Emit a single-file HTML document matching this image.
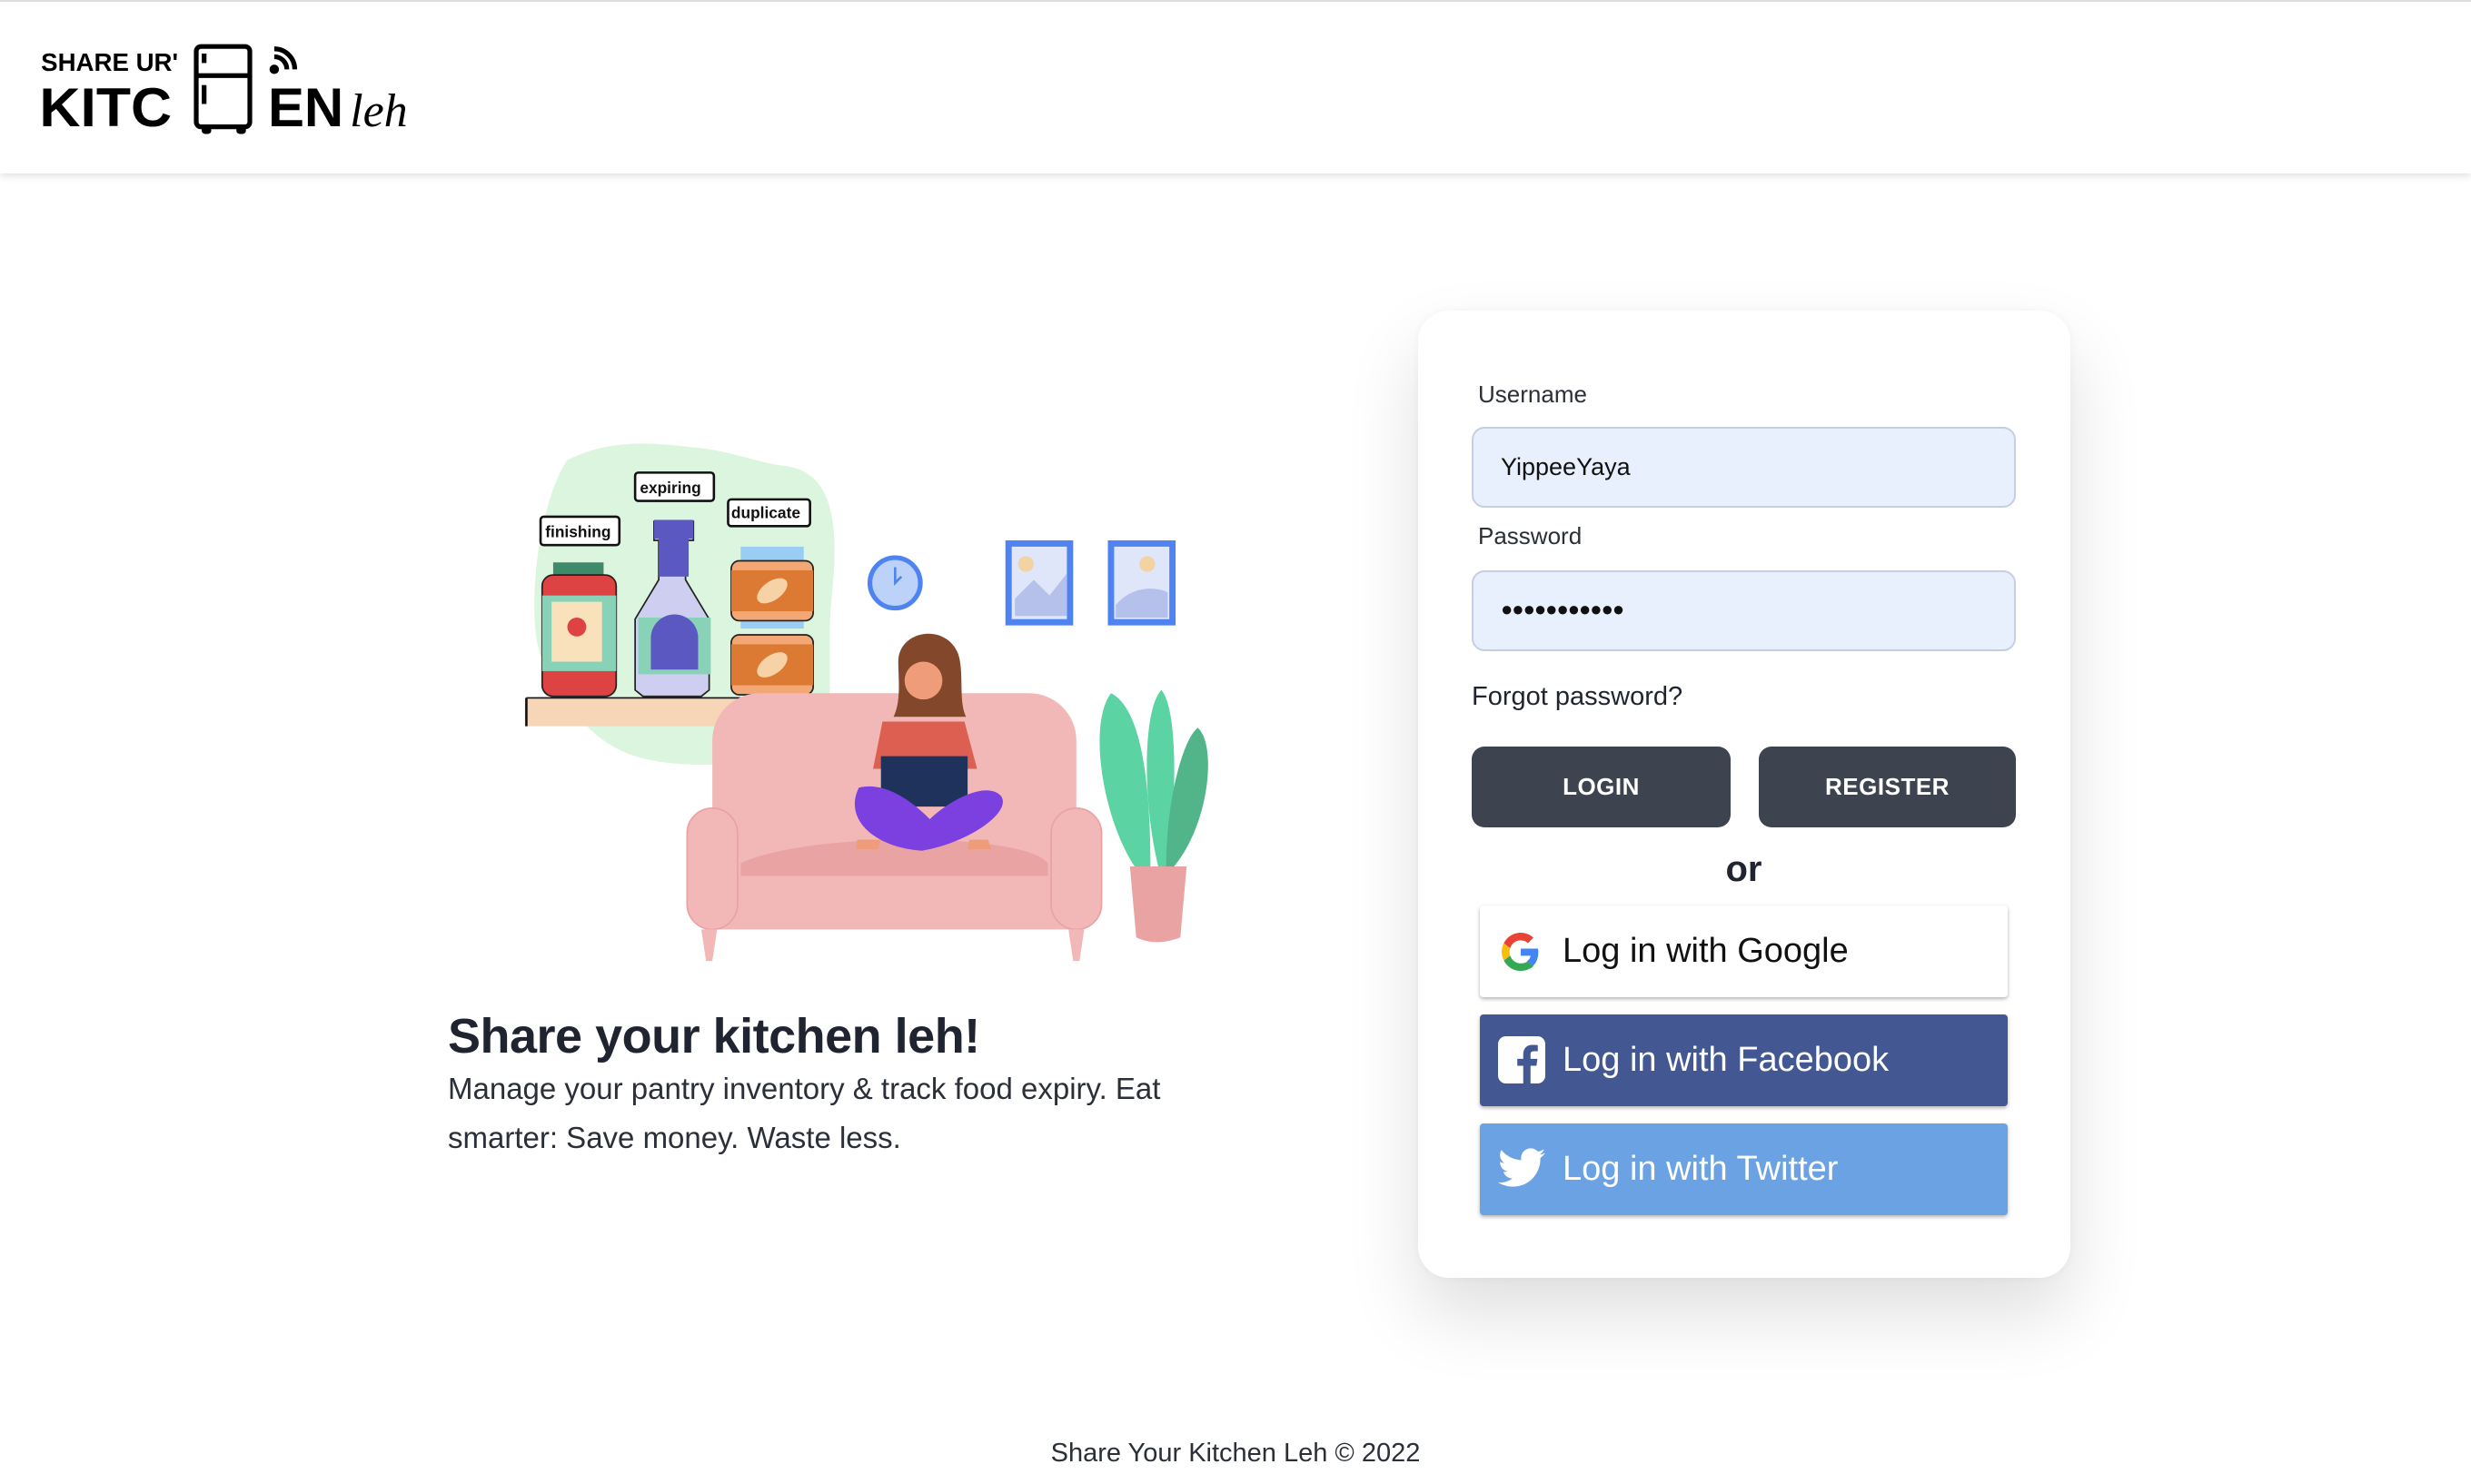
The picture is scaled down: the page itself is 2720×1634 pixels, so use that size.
<!DOCTYPE html>
<html><head><meta charset="utf-8"><style>
*{margin:0;padding:0;box-sizing:border-box}
body{width:2720px;height:1634px;background:#fff;font-family:"Liberation Sans",Arial,sans-serif;position:relative;overflow:hidden;color:#1f2430}
.hdr{position:absolute;left:0;top:0;width:2720px;height:191px;border-top:2px solid #ddd;box-shadow:0 3px 8px rgba(0,0,0,.12);background:#fff}
.abs{position:absolute}
.card{left:1561px;top:342px;width:718px;height:1065px;border-radius:34px;background:#fff;box-shadow:0 40px 80px rgba(0,0,0,.13),0 0 10px rgba(0,0,0,.04)}
.lbl{font-size:26px;color:#2b2f38}
.inp{left:1620px;width:599px;height:89px;background:#e8effd;border:2px solid #c6cfe0;border-radius:14px;font-size:27px;padding-left:30px;line-height:85px;color:#111}
.btn{top:822px;height:89px;background:#3e4350;border-radius:14px;color:#fff;font-weight:bold;font-size:26px;text-align:center;line-height:89px;letter-spacing:.5px}
.soc{left:1629px;width:581px;height:101px;border-radius:4px;box-shadow:0 2px 4px rgba(0,0,0,.3);font-size:38px;line-height:101px;padding-left:91px}
</style></head><body>
<div class="hdr"></div>
<svg class="abs" style="left:0;top:0" width="2720" height="1634" viewBox="0 0 1568 942">
<!-- logo -->
<text x="26" y="45" font-family="Liberation Sans" font-weight="bold" font-size="16" textLength="87" lengthAdjust="spacingAndGlyphs">SHARE UR'</text>
<text x="25" y="80" font-family="Liberation Sans" font-weight="bold" font-size="35" textLength="84" lengthAdjust="spacingAndGlyphs">KITC</text>
<rect x="124.5" y="29.5" width="34" height="51" rx="3" fill="none" stroke="#000" stroke-width="3"/>
<line x1="124" y1="48" x2="159" y2="48" stroke="#000" stroke-width="3"/>
<rect x="128" y="34" width="3" height="6"/><rect x="128" y="54" width="3" height="12"/>
<rect x="128" y="80" width="6" height="5" rx="2"/><rect x="150" y="80" width="6" height="5" rx="2"/>
<circle cx="174" cy="44" r="3"/>
<path d="M174 36a8 8 0 0 1 8 8M174 31a13 13 0 0 1 13 13" fill="none" stroke="#000" stroke-width="3"/>
<text x="170" y="80" font-family="Liberation Sans" font-weight="bold" font-size="35" textLength="48" lengthAdjust="spacingAndGlyphs">EN</text>
<text x="222" y="80" font-family="Liberation Serif" font-style="italic" font-size="30">leh</text>
<!-- illustration -->
<path d="M360 292c30-15 60-10 80-8 25 2 40 10 60 12 30 5 32 40 28 80-4 40 2 60-5 90l25 30-35-20c-30 10-90 15-120 0-25-12-40-40-50-60-10-30 0-100 17-124z" fill="#dcf5de"/>
<rect x="333" y="443" width="191" height="18" fill="#f6d6b6"/><line x1="334" y1="443" x2="334" y2="461" stroke="#111" stroke-width="1.5"/><line x1="334" y1="443" x2="520" y2="443" stroke="#111"/>
<rect x="351" y="357" width="32" height="9" fill="#3f8a6a"/>
<rect x="344" y="365" width="47" height="77" rx="7" fill="#dc4342" stroke="#222" stroke-width="1"/>
<rect x="344" y="378" width="47" height="48" fill="#88d2b7"/>
<rect x="350" y="382" width="32" height="38" fill="#f9e1bc"/>
<circle cx="366" cy="398" r="6" fill="#dc4342"/>
<path d="M415 331h25v12h-5v25l15 25v45l-5 4h-37l-5-4v-45l15-25v-25h-3z" fill="#cecff0" stroke="#222" stroke-width="1"/>
<rect x="415" y="330" width="25" height="12" fill="#5b59c1"/><rect x="418" y="340" width="19" height="26" fill="#5b59c1"/>
<rect x="405" y="392" width="46" height="36" fill="#88d2b7"/>
<path d="M413 425v-20a15 15 0 0 1 30 0v20z" fill="#5b59c1"/>
<rect x="470" y="347" width="40" height="52" fill="#9acdf3"/>
<rect x="464" y="356" width="52" height="38" rx="5" fill="#f2a774" stroke="#222" stroke-width="1"/>
<rect x="464" y="362" width="52" height="26" fill="#dc7a33"/>
<ellipse cx="490" cy="375" rx="11" ry="6" fill="#f6d2a6" transform="rotate(-35 490 375)"/>
<rect x="464" y="403" width="52" height="38" rx="5" fill="#f2a774" stroke="#222" stroke-width="1"/>
<rect x="464" y="409" width="52" height="26" fill="#dc7a33"/>
<ellipse cx="490" cy="422" rx="11" ry="6" fill="#f6d2a6" transform="rotate(-35 490 422)"/>
<g font-family="Liberation Sans" font-weight="bold" font-size="10" fill="#111">
<rect x="343" y="328" width="50" height="18" rx="2" fill="#fff" stroke="#111" stroke-width="1.5"/><text x="346" y="341">finishing</text>
<rect x="403" y="300" width="50" height="18" rx="2" fill="#fff" stroke="#111" stroke-width="1.5"/><text x="406" y="313">expiring</text>
<rect x="462" y="317" width="52" height="17" rx="2" fill="#fff" stroke="#111" stroke-width="1.5"/><text x="464" y="329">duplicate</text>
</g>
<circle cx="568" cy="370" r="16" fill="#bcd2f9" stroke="#4f84f0" stroke-width="3"/><path d="M568 360v10l4-4" stroke="#4f84f0" fill="none" stroke-width="1.5"/>
<rect x="640" y="345" width="39" height="50" fill="#dfe6fa" stroke="#4f84f0" stroke-width="4"/><path d="M644 380l12-12 10 10 11-14v27h-33z" fill="#b6c1eb"/><circle cx="651" cy="358" r="5" fill="#f3d2a4"/>
<rect x="705" y="345" width="39" height="50" fill="#dfe6fa" stroke="#4f84f0" stroke-width="4"/><path d="M708 392v-8c10-12 25-12 33-8v16z" fill="#b6c1eb"/><circle cx="728" cy="358" r="5" fill="#f3d2a4"/>
<!-- sofa -->
<rect x="452" y="440" width="231" height="110" rx="30" fill="#f2b8b8"/>
<rect x="436" y="520" width="263" height="70" rx="20" fill="#f2b8b8"/>
<path d="M470 548c40-20 180-20 195 0v8H470z" fill="#eaa3a3"/>
<rect x="436" y="513" width="32" height="77" rx="16" fill="#f2b8b8" stroke="#eaa3a3"/>
<rect x="667" y="513" width="32" height="77" rx="16" fill="#f2b8b8" stroke="#eaa3a3"/>
<path d="M445 590h10l-3 20h-4zM678 590h10l-3 20h-4z" fill="#f2b8b8"/>
<!-- woman -->
<path d="M570 420c0-20 30-25 38-5 4 12 0 30 5 40h-46c5-10 3-25 3-35z" fill="#83472c"/>
<circle cx="586" cy="432" r="12" fill="#ee9c7a"/>
<path d="M560 458h52l8 30h-66z" fill="#dc5f51"/>
<rect x="559" y="480" width="55" height="32" fill="#1f325c"/>
<path d="M545 500c20-5 40 15 45 20 10-10 35-25 45-15 8 10-20 30-50 35-30-2-50-20-40-40z" fill="#7d40e0"/>
<path d="M544 533h15l-2 6h-14zM615 533h12l2 6h-15z" fill="#ee9c7a"/>
<!-- plant -->
<path d="M720 550c-20-30-30-90-15-110 20 10 25 60 25 110z" fill="#5bd3a2"/>
<path d="M735 550c-10-40-10-100 2-112 12 15 8 80 5 112z" fill="#5bd3a2"/>
<path d="M740 550c0-40 10-80 20-88 12 10 8 60-15 88z" fill="#52b58a"/>
<path d="M717 550h36l-4 45c-10 4-20 4-28 0z" fill="#eaa3a3"/>
</svg>
<div class="abs" style="left:493px;top:1110px;font-size:54px;font-weight:bold;color:#1f2430;letter-spacing:-0.5px">Share your kitchen leh!</div>
<div class="abs" style="left:493px;top:1172px;width:840px;font-size:33px;line-height:54px;color:#2b2f38">Manage your pantry inventory &amp; track food expiry. Eat smarter: Save money. Waste less.</div>
<div class="abs card"></div>
<div class="abs lbl" style="left:1627px;top:419px">Username</div>
<div class="abs inp" style="top:470px">YippeeYaya</div>
<div class="abs lbl" style="left:1627px;top:575px">Password</div>
<div class="abs inp" style="top:628px;font-size:22px;line-height:82px;letter-spacing:-1px">●●●●●●●●●●●</div>
<div class="abs" style="left:1620px;top:751px;font-size:29px;color:#1f2430">Forgot password?</div>
<div class="abs btn" style="left:1620px;width:285px">LOGIN</div>
<div class="abs btn" style="left:1936px;width:283px">REGISTER</div>
<div class="abs" style="left:1620px;width:599px;top:935px;text-align:center;font-size:40px;font-weight:bold;color:#1f2430">or</div>
<div class="abs soc" style="top:997px;background:#fff;color:#111">Log in with Google
<svg class="abs" style="left:24px;top:30px" width="42" height="42" viewBox="0 0 48 48"><path fill="#EA4335" d="M24 9.5c3.5 0 6.6 1.2 9.1 3.6l6.8-6.8C35.8 2.4 30.3 0 24 0 14.6 0 6.6 5.4 2.7 13.3l7.9 6.1C12.5 13.6 17.8 9.5 24 9.5z"/><path fill="#4285F4" d="M46.1 24.5c0-1.6-.1-3.1-.4-4.5H24v9h12.4c-.5 2.9-2.2 5.4-4.7 7l7.6 5.9c4.4-4.1 6.8-10.1 6.8-17.4z"/><path fill="#FBBC05" d="M10.5 28.6c-.5-1.4-.8-3-.8-4.6s.3-3.2.8-4.6l-7.9-6.1C1 16.6 0 20.2 0 24s1 7.4 2.7 10.7z"/><path fill="#34A853" d="M24 48c6.5 0 11.9-2.1 15.9-5.8l-7.6-5.9c-2.1 1.4-4.9 2.3-8.300 2.3-6.2 0-11.5-4.2-13.4-9.9l-7.9 6.1C6.6 42.6 14.6 48 24 48z"/></svg></div>
<div class="abs soc" style="top:1117px;background:#435893;color:#fff">Log in with Facebook
<svg class="abs" style="left:20px;top:24px" width="52" height="52" viewBox="0 0 24 24"><rect width="24" height="24" rx="4" fill="#fff"/><path d="M16.5 24v-9h3l.5-3.5h-3.5V9.3c0-1 .3-1.7 1.8-1.7h1.9V4.5c-.3 0-1.5-.1-2.8-.1-2.7 0-4.6 1.7-4.6 4.8v2.3h-3V15h3v9z" fill="#435893"/></svg></div>
<div class="abs soc" style="top:1237px;background:#6ba2e4;color:#fff">Log in with Twitter
<svg class="abs" style="left:20px;top:26px" width="52" height="46" viewBox="0 0 24 20"><path fill="#fff" d="M24 2.4c-.9.4-1.8.7-2.8.8 1-.6 1.8-1.600 2.2-2.7-1 .6-2 1-3.1 1.2C19.4.7 18.1 0 16.6 0c-2.7 0-4.9 2.2-4.9 4.9 0 .4 0 .8.1 1.1C7.7 5.8 4.1 3.9 1.7.9c-.4.7-.7 1.6-.7 2.5 0 1.7.9 3.2 2.2 4.1-.8 0-1.6-.2-2.2-.6v.1c0 2.4 1.7 4.4 3.9 4.8-.4.1-.8.2-1.3.2-.3 0-.6 0-.9-.1.6 2 2.4 3.4 4.6 3.4-1.7 1.3-3.8 2.1-6.1 2.1-.4 0-.8 0-1.2-.1 2.2 1.4 4.8 2.2 7.5 2.2 9.1 0 14-7.5 14-14v-.6c1-.7 1.8-1.6 2.5-2.5z"/></svg></div>
<div class="abs" style="left:0;width:2720px;top:1584px;text-align:center;font-size:29px;color:#2b2f38">Share Your Kitchen Leh © 2022</div>
</body></html>
